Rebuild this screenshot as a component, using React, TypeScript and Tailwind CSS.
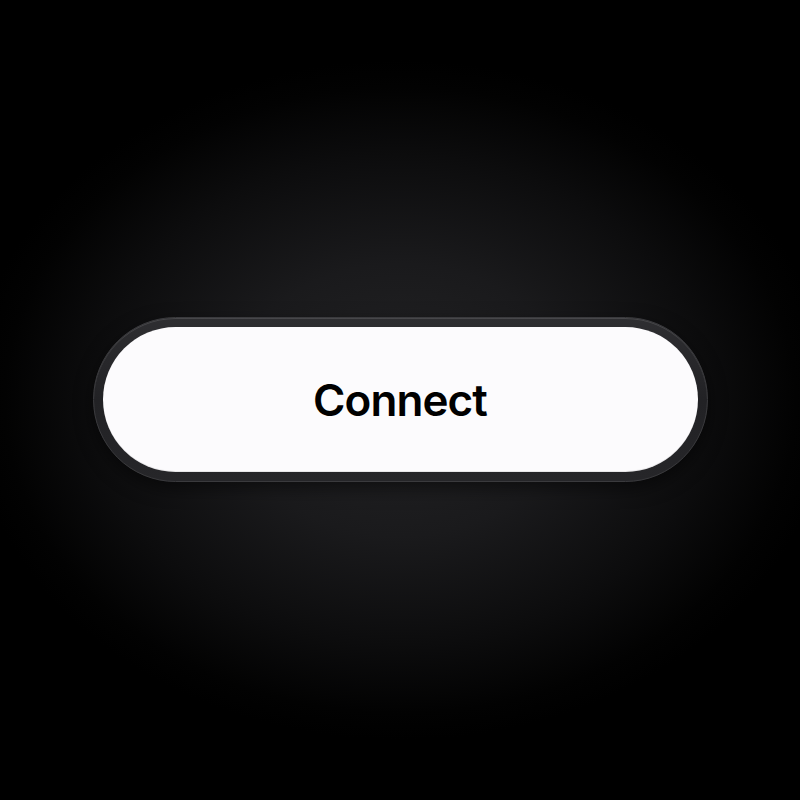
export default function App() {
  return (
    <div className="flex h-[800px] w-[800px] items-center justify-center bg-[radial-gradient(ellipse_430px_340px_at_50%_50%,#242426_0%,#1a1a1c_40%,#0c0c0d_72%,#020202_92%,#000_100%)]">
      <div className="mt-[-1px] rounded-full border border-[#3a3a3d] bg-[linear-gradient(180deg,#2e2e31_0%,#222225_50%,#262629_100%)] p-[9px] shadow-[0_6px_18px_rgba(0,0,0,0.5),inset_0_1px_0_rgba(255,255,255,0.12)]">
        <button className="flex h-[145px] w-[595px] items-center justify-center rounded-full bg-[#fcfbfd] shadow-[inset_0_-1px_0_rgba(0,0,0,0.08)]">
          <span className="font-['Inter',sans-serif] text-[44px] font-semibold tracking-[-0.02em] text-black">
            Connect
          </span>
        </button>
      </div>
    </div>
  )
}
